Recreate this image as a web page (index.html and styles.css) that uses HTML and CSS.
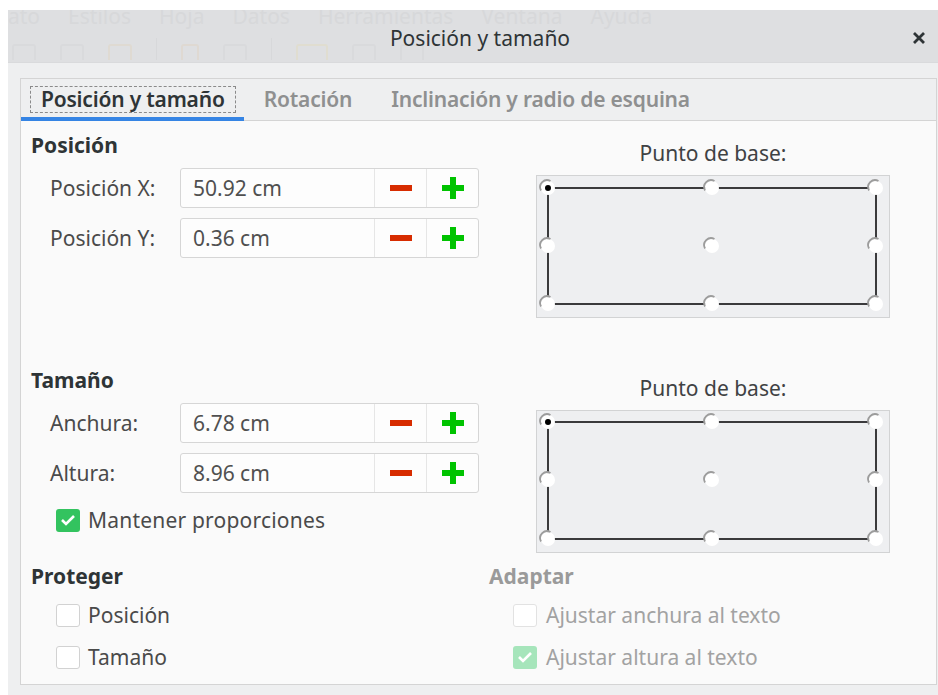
FILE: index.html
```html
<!DOCTYPE html>
<html>

<head>
    <title>Posición y tamaño</title>
    <link rel="stylesheet" href="styles.css">
</head>

<body>
    <div class="window">
        <div class="titlebar">
            <div class="ghost" aria-hidden="true">
                <div class="ghost-menu">
                    <span>ato</span><span>Estilos</span><span>Hoja</span><span>Datos</span>
                    <span>Herramientas</span><span>Ventana</span><span>Ayuda</span>
                </div>
                <div class="ghost-tools">
                    <i class="g1"></i><i class="g2"></i><i class="g3"></i><b></b>
                    <i class="g4"></i><i class="g5"></i><b></b><i class="g6"></i>
                    <i class="g7"></i><i class="g8"></i>
                </div>
            </div>
            <div class="title">Posición y tamaño</div>
            <div class="close">
                <svg width="14" height="14" viewBox="0 0 14 14">
                    <path d="M2 2 L12 12 M12 2 L2 12" stroke="#2e3436" stroke-width="2.8" stroke-linecap="butt" />
                </svg>
            </div>
        </div>

        <div class="body">
            <div class="notebook">
                <div class="tabs">
                    <div class="tab active"><span>Posición y tamaño</span></div>
                    <div class="tab"><span>Rotación</span></div>
                    <div class="tab"><span>Inclinación y radio de esquina</span></div>
                </div>

                <div class="panel">
                    <!-- posicion -->
                    <div class="section">
                        <div class="col-left">
                            <h3>Posición</h3>
                            <div class="field">
                                <label>Posición X:</label>
                                <div class="spin">
                                    <div class="value">50.92 cm</div>
                                    <div class="btn"><svg width="22" height="6"><rect width="22" height="6" fill="#d72c00" /></svg></div>
                                    <div class="btn"><svg width="22" height="22"><path d="M8 0h6v8h8v6h-8v8h-6v-8h-8v-6h8z" fill="#00c300" /></svg></div>
                                </div>
                            </div>
                            <div class="field">
                                <label>Posición Y:</label>
                                <div class="spin">
                                    <div class="value">0.36 cm</div>
                                    <div class="btn"><svg width="22" height="6"><rect width="22" height="6" fill="#d72c00" /></svg></div>
                                    <div class="btn"><svg width="22" height="22"><path d="M8 0h6v8h8v6h-8v8h-6v-8h-8v-6h8z" fill="#00c300" /></svg></div>
                                </div>
                            </div>
                        </div>
                        <div class="col-right">
                            <div class="base-label">Punto de base:</div>
                            <div class="base-box">
                                <svg width="352" height="141" viewBox="0 0 352 141">
                                    <defs>
                                        <g id="dot">
                                            <circle r="7" fill="#fff" />
                                            <path d="M-7 2.5 A7 7 0 0 1 2.5 -7" fill="none" stroke="#9c9c9c" stroke-width="1.8" />
                                        </g>
                                    </defs>
                                    <rect x="11" y="12" width="328" height="116" fill="none" stroke="#3a3a3c" stroke-width="2" />
                                    <use href="#dot" x="11" y="12" /><use href="#dot" x="175" y="12" /><use href="#dot" x="339" y="12" />
                                    <use href="#dot" x="11" y="70" /><use href="#dot" x="175" y="70" /><use href="#dot" x="339" y="70" />
                                    <use href="#dot" x="11" y="128" /><use href="#dot" x="175" y="128" /><use href="#dot" x="339" y="128" />
                                    <circle cx="11" cy="12" r="3" fill="#000" />
                                </svg>
                            </div>
                        </div>
                    </div>

                    <!-- tamaño -->
                    <div class="section second">
                        <div class="col-left">
                            <h3>Tamaño</h3>
                            <div class="field">
                                <label>Anchura:</label>
                                <div class="spin">
                                    <div class="value">6.78 cm</div>
                                    <div class="btn"><svg width="22" height="6"><rect width="22" height="6" fill="#d72c00" /></svg></div>
                                    <div class="btn"><svg width="22" height="22"><path d="M8 0h6v8h8v6h-8v8h-6v-8h-8v-6h8z" fill="#00c300" /></svg></div>
                                </div>
                            </div>
                            <div class="field">
                                <label>Altura:</label>
                                <div class="spin">
                                    <div class="value">8.96 cm</div>
                                    <div class="btn"><svg width="22" height="6"><rect width="22" height="6" fill="#d72c00" /></svg></div>
                                    <div class="btn"><svg width="22" height="22"><path d="M8 0h6v8h8v6h-8v8h-6v-8h-8v-6h8z" fill="#00c300" /></svg></div>
                                </div>
                            </div>
                            <div class="check keep">
                                <span class="box checked"><svg width="16" height="12" viewBox="0 0 16 12"><path d="M2 6 L6 10 L14 2" fill="none" stroke="#fff" stroke-width="2.6" /></svg></span>
                                Mantener proporciones
                            </div>
                        </div>
                        <div class="col-right">
                            <div class="base-label">Punto de base:</div>
                            <div class="base-box">
                                <svg width="352" height="141" viewBox="0 0 352 141">
                                    <rect x="11" y="11" width="328" height="117" fill="none" stroke="#3a3a3c" stroke-width="2" />
                                    <use href="#dot" x="11" y="11" /><use href="#dot" x="175" y="11" /><use href="#dot" x="339" y="11" />
                                    <use href="#dot" x="11" y="69" /><use href="#dot" x="175" y="69" /><use href="#dot" x="339" y="69" />
                                    <use href="#dot" x="11" y="128" /><use href="#dot" x="175" y="128" /><use href="#dot" x="339" y="128" />
                                    <circle cx="11" cy="11" r="3" fill="#000" />
                                </svg>
                            </div>
                        </div>
                    </div>

                    <!-- proteger / adaptar -->
                    <div class="section third">
                        <div class="col-protect">
                            <h3>Proteger</h3>
                            <div class="check"><span class="box"></span>Posición</div>
                            <div class="check"><span class="box"></span>Tamaño</div>
                        </div>
                        <div class="col-fit disabled">
                            <h3>Adaptar</h3>
                            <div class="check"><span class="box"></span>Ajustar anchura al texto</div>
                            <div class="check">
                                <span class="box checked"><svg width="16" height="12" viewBox="0 0 16 12"><path d="M2 6 L6 10 L14 2" fill="none" stroke="#fff" stroke-width="2.6" /></svg></span>
                                Ajustar altura al texto
                            </div>
                        </div>
                    </div>
                </div>
            </div>
        </div>
    </div>
</body>

</html>
```

FILE: styles.css
```css
body {
    margin: 0;
    background: #ffffff;
    font-family: "Noto Sans", "Open Sans", sans-serif;
    font-size: 21px;
    color: #4a4a4a;
}

.window {
    margin: 10px 0 0 8px;
    height: 685px;
    background: #eeeff0;
    overflow: hidden;
}

/* title bar with the faded app behind it */
.titlebar {
    display: grid;
    height: 52px;
    background: #dedfe1;
    border-bottom: 1px solid #d9dadc;
    overflow: hidden;
}

.ghost,
.title,
.close {
    grid-area: 1 / 1;
}

.ghost-menu {
    display: flex;
    gap: 28px;
    margin-top: -6px;
    line-height: 24px;
    color: #d7d8da;
}

.ghost-tools {
    display: flex;
    align-items: flex-end;
    gap: 24px;
    margin-top: 10px;
    padding-left: 4px;
}

.ghost-tools i {
    width: 20px;
    height: 14px;
    border: 2px solid #d9dadc;
    border-bottom: none;
    border-radius: 3px 3px 0 0;
}

.ghost-tools .g3 {
    border-color: #dfdad2;
}

.ghost-tools .g4 {
    border-color: #dfd9d2;
    width: 14px;
}

.ghost-tools .g6 {
    border-color: #e0ddd0;
    width: 28px;
}

.ghost-tools b {
    width: 1px;
    height: 22px;
    background: #d7d8da;
}

.title {
    align-self: center;
    justify-self: center;
    padding: 3px 0 0 14px;
    color: #2e3436;
}

.close {
    align-self: center;
    justify-self: end;
    display: flex;
    padding: 4px 12px 0 0;
}

/* notebook */
.body {
    padding: 15px 1px 0 12px;
}

.notebook {
    border: 1px solid #d4d4d4;
    background: #eeeff0;
}

.tabs {
    display: flex;
    height: 41px;
    border-bottom: 1px solid #d4d4d4;
}

.tab {
    height: 42px;
    margin-bottom: -1px;
    padding: 7px 8px 0 9px;
    box-sizing: border-box;
    font-weight: 600;
    letter-spacing: -0.2px;
    color: #8f9090;
}

.tab span {
    display: block;
    padding: 0 10px;
    line-height: 25px;
    border: 1px dashed transparent;
}

.tab.active {
    color: #2e3436;
    box-shadow: inset 0 -4px 0 #3584e4;
}

.tab.active span {
    border-color: #8a8a8a;
}

.panel {
    height: 563px;
    box-sizing: border-box;
    padding: 12px 10px 0 10px;
    background: #fafafa;
}

.section {
    display: flex;
}

.section.second {
    margin-top: 50px;
}

.section.third {
    margin-top: 11px;
}

h3 {
    margin: 0;
    font-size: 21px;
    line-height: 24px;
    font-weight: 700;
    color: #2e3436;
}

.col-left {
    width: 505px;
}

.col-right {
    width: 354px;
}

.field {
    display: flex;
    align-items: center;
    margin: 11px 0 0 19px;
}

.field + .field {
    margin-top: 10px;
}

.field label {
    width: 130px;
}

.spin {
    display: flex;
    width: 299px;
    height: 40px;
    box-sizing: border-box;
    border: 1px solid #d6d6d6;
    border-radius: 3px;
    background: #fdfdfd;
}

.spin .value {
    flex: 1;
    padding-left: 12px;
    line-height: 38px;
    color: #505050;
}

.spin .btn {
    width: 51px;
    display: flex;
    align-items: center;
    justify-content: center;
    border-left: 1px solid #e6e6e6;
}

.base-label {
    margin-top: 8px;
    line-height: 24px;
    text-align: center;
    color: #3f4244;
}

.base-box {
    margin-top: 10px;
    height: 143px;
    box-sizing: border-box;
    border: 1px solid #d2d3d4;
    background: #eeeff1;
}

.base-box svg {
    display: block;
}

/* checkboxes */
.check {
    display: flex;
    align-items: center;
    gap: 8px;
    height: 32px;
    margin: 10px 0 0 25px;
    color: #4a4a4a;
}

.check.keep {
    height: 24px;
    margin-top: 15px;
    letter-spacing: 0.2px;
}

.box {
    width: 24px;
    height: 23px;
    box-sizing: border-box;
    border: 1px solid #d2d2d2;
    border-radius: 3px;
    background: #ffffff;
    display: flex;
    align-items: center;
    justify-content: center;
}

.box.checked {
    border: none;
    background: #33c35f;
}

.col-protect {
    width: 458px;
}

.col-protect h3 + .check,
.col-fit h3 + .check {
    margin-top: 11px;
}

.col-fit .check {
    margin-left: 24px;
    gap: 9px;
}

.disabled h3 {
    color: #9a9a9a;
}

.disabled .check {
    color: #a2a2a2;
}

.disabled .box {
    border-color: #e2e2e2;
}

.disabled .box.checked {
    background: #a6e5bb;
}
```
